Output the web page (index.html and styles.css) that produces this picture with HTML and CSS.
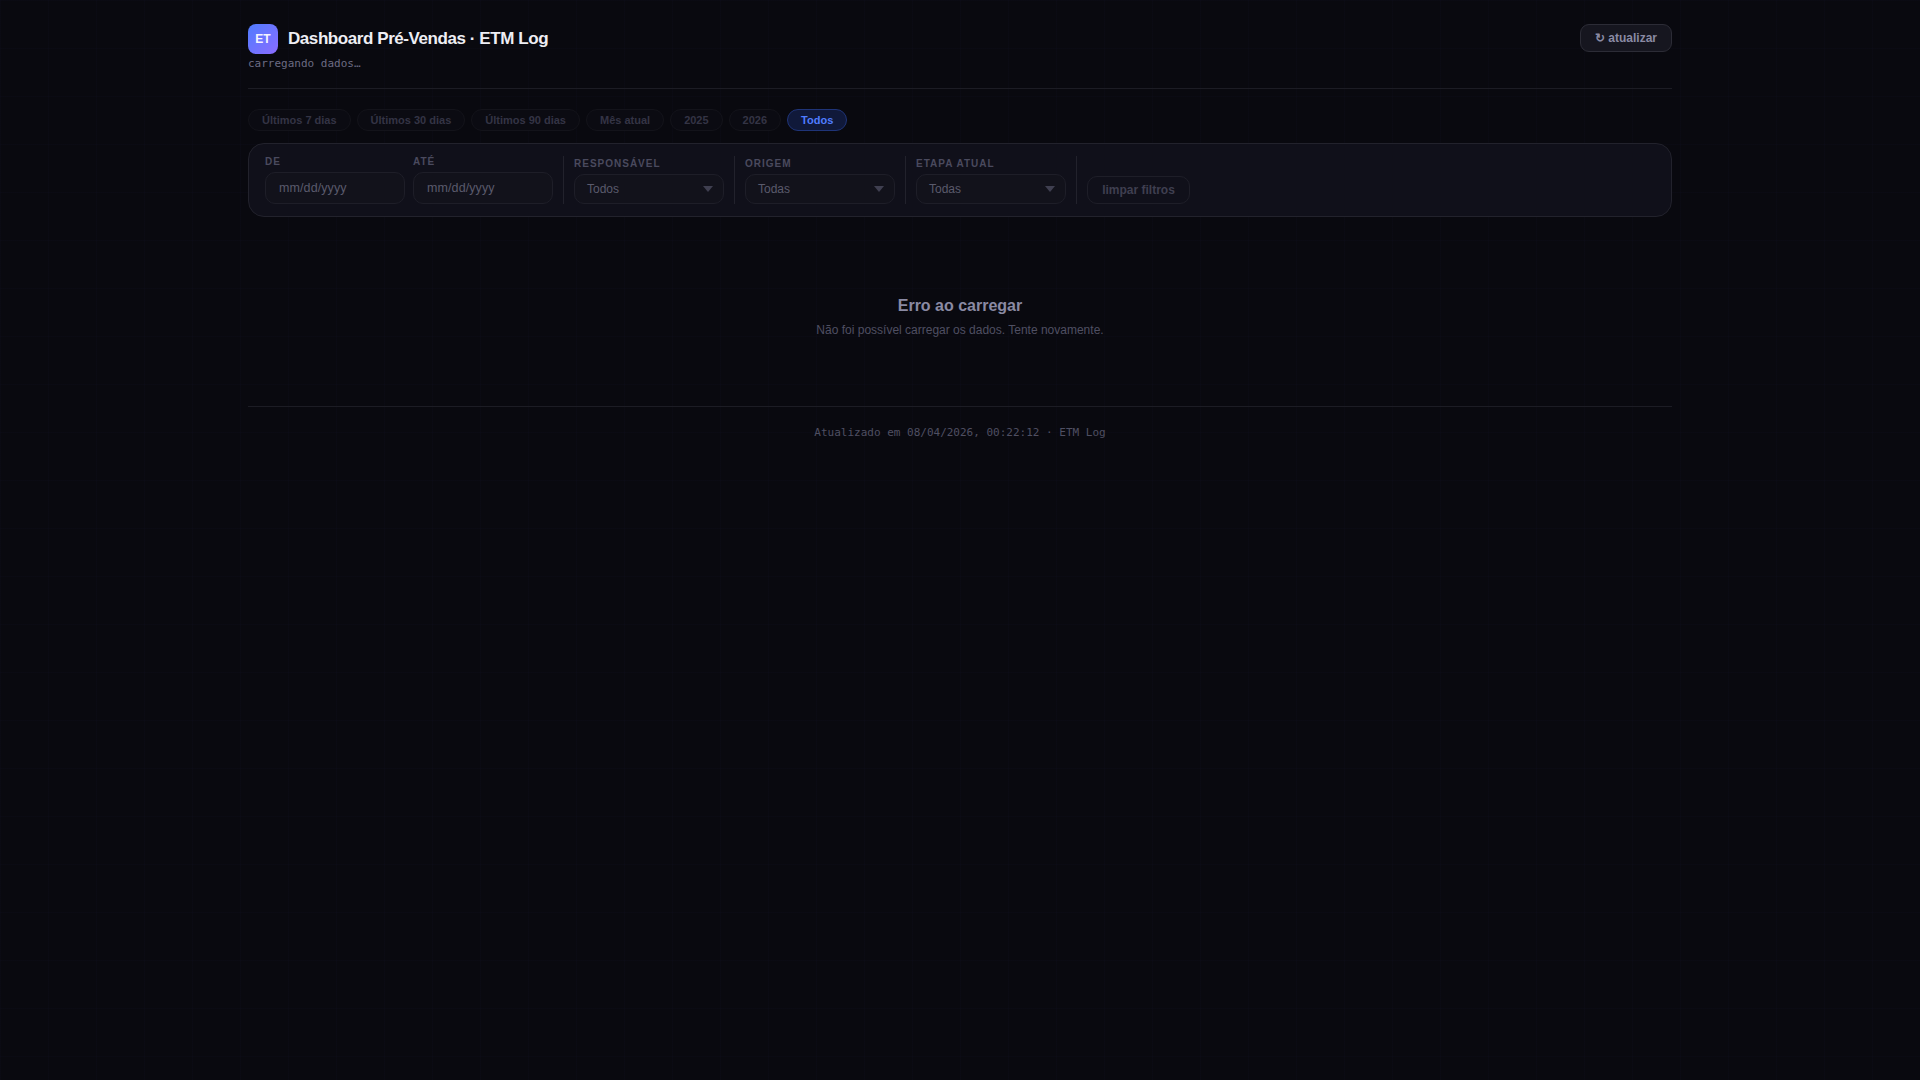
FILE: index.html
```html
<!DOCTYPE html>
<html lang="pt-BR">
<head>
<meta charset="utf-8">
<title>Dashboard Pré-Vendas · ETM Log</title>
<link rel="stylesheet" href="styles.css">
</head>
<body>
<div class="page">
  <header class="header">
    <div class="brand">
      <div class="brand-row">
        <div class="logo">ET</div>
        <h1 class="title">Dashboard Pré-Vendas · ETM Log</h1>
      </div>
      <div class="subtitle">carregando dados…</div>
    </div>
    <button class="refresh">↻ atualizar</button>
  </header>
  <nav class="pills">
    <button class="pill">Últimos 7 dias</button>
    <button class="pill">Últimos 30 dias</button>
    <button class="pill">Últimos 90 dias</button>
    <button class="pill">Mês atual</button>
    <button class="pill">2025</button>
    <button class="pill">2026</button>
    <button class="pill active">Todos</button>
  </nav>
  <section class="filters">
    <div class="field date">
      <label class="label">DE</label>
      <div class="input">mm/dd/yyyy</div>
    </div>
    <div class="field date">
      <label class="label">ATÉ</label>
      <div class="input">mm/dd/yyyy</div>
    </div>
    <div class="sep"></div>
    <div class="field sel">
      <label class="label">RESPONSÁVEL</label>
      <div class="select">Todos<svg class="caret" viewBox="0 0 10 6"><path d="M0 0h10L5 6z"/></svg></div>
    </div>
    <div class="sep"></div>
    <div class="field sel">
      <label class="label">ORIGEM</label>
      <div class="select">Todas<svg class="caret" viewBox="0 0 10 6"><path d="M0 0h10L5 6z"/></svg></div>
    </div>
    <div class="sep"></div>
    <div class="field sel">
      <label class="label">ETAPA ATUAL</label>
      <div class="select">Todas<svg class="caret" viewBox="0 0 10 6"><path d="M0 0h10L5 6z"/></svg></div>
    </div>
    <div class="sep"></div>
    <button class="clear">limpar filtros</button>
  </section>
  <section class="error">
    <h2 class="error-title">Erro ao carregar</h2>
    <p class="error-text">Não foi possível carregar os dados. Tente novamente.</p>
  </section>
  <footer class="footer">Atualizado em 08/04/2026, 00:22:12 · ETM Log</footer>
</div>
</body>
</html>
```
FILE: styles.css
```css
* { box-sizing: border-box; }
html, body { margin: 0; height: 100%; }
body {
  background-color: #09090f;
  background-image:
    linear-gradient(rgba(110,110,255,.014) 1px, transparent 1px),
    linear-gradient(90deg, rgba(110,110,255,.014) 1px, transparent 1px);
  background-size: 48px 48px;
  font-family: "Liberation Sans", Arial, sans-serif;
  color: #8a8aa3;
}
.page { width: 1424px; margin: 0 auto; padding-top: 24px; }
.header {
  display: flex; justify-content: space-between; align-items: flex-start;
  height: 65px; border-bottom: 1px solid #1c1c24;
}
.brand-row { display: flex; align-items: center; gap: 10px; }
.logo {
  width: 30px; height: 30px; border-radius: 8px;
  background: linear-gradient(135deg, #4f7cff, #8b6cff);
  color: #f4f4ff; font-size: 12px; font-weight: 700;
  display: flex; align-items: center; justify-content: center;
}
.title { margin: 0; font-size: 17px; font-weight: 700; letter-spacing: -0.43px; color: #eeeef4; }
.subtitle { margin-top: 3px; font: 11px/14px "DejaVu Sans Mono", monospace; color: #6c6c84; }
.refresh {
  height: 28px; width: 92px; padding: 0; border-radius: 9px;
  border: 1px solid #2c2c36; background: #16161f; color: #8a8aa3;
  font: 700 12px "Liberation Sans", Arial, sans-serif;
}
.pills { display: flex; gap: 6px; margin-top: 20px; }
.pill {
  height: 22px; padding: 0 13px; border-radius: 11px;
  border: 1px solid #13131a; background: #0b0b12; color: #343445;
  font: 700 11px "Liberation Sans", Arial, sans-serif;
}
.pill.active { background: #10193a; border-color: #1f3478; color: #4f7cff; }
.filters {
  display: flex; align-items: flex-end; gap: 8px;
  margin-top: 12px; height: 74px; padding: 12px 16px;
  background: #10101a; border: 1px solid #22222c; border-radius: 16px;
}
.field { display: flex; flex-direction: column; gap: 4px; }
.date { width: 140px; }
.sel { width: 150px; }
.label { font-size: 10px; line-height: 12px; font-weight: 700; letter-spacing: 1px; color: #4a4a5e; }
.input, .select {
  height: 32px; border: 1px solid #1e1e28; border-radius: 10px; background: #12121b;
  color: #5a5a6c; font-size: 12.5px; letter-spacing: .1px; display: flex; align-items: center; padding: 0 13px;
}
.select { height: 30px; font-size: 12px; letter-spacing: 0; justify-content: space-between; padding: 0 10px 0 12px; }
.caret { width: 10px; height: 6px; fill: #3f3f50; }
.sep { width: 1px; height: 48px; background: #22222c; margin: 0 2px; }
.clear {
  height: 28px; width: 103px; padding: 0;
  border: 1px solid #1e1e28; border-radius: 10px; background: transparent; color: #3f3f50;
  font: 700 12px "Liberation Sans", Arial, sans-serif;
}
.error { text-align: center; padding-top: 80px; height: 189px; }
.error-title { margin: 0; font-size: 16px; line-height: 18px; font-weight: 700; color: #8a8aa3; }
.error-text { margin: 8px 0 0; font-size: 12px; line-height: 14px; color: #4f4f62; }
.footer {
  padding-top: 19px; border-top: 1px solid #1c1c24; text-align: center;
  font: 11px/14px "DejaVu Sans Mono", monospace; color: #4f4f62;
}
```
